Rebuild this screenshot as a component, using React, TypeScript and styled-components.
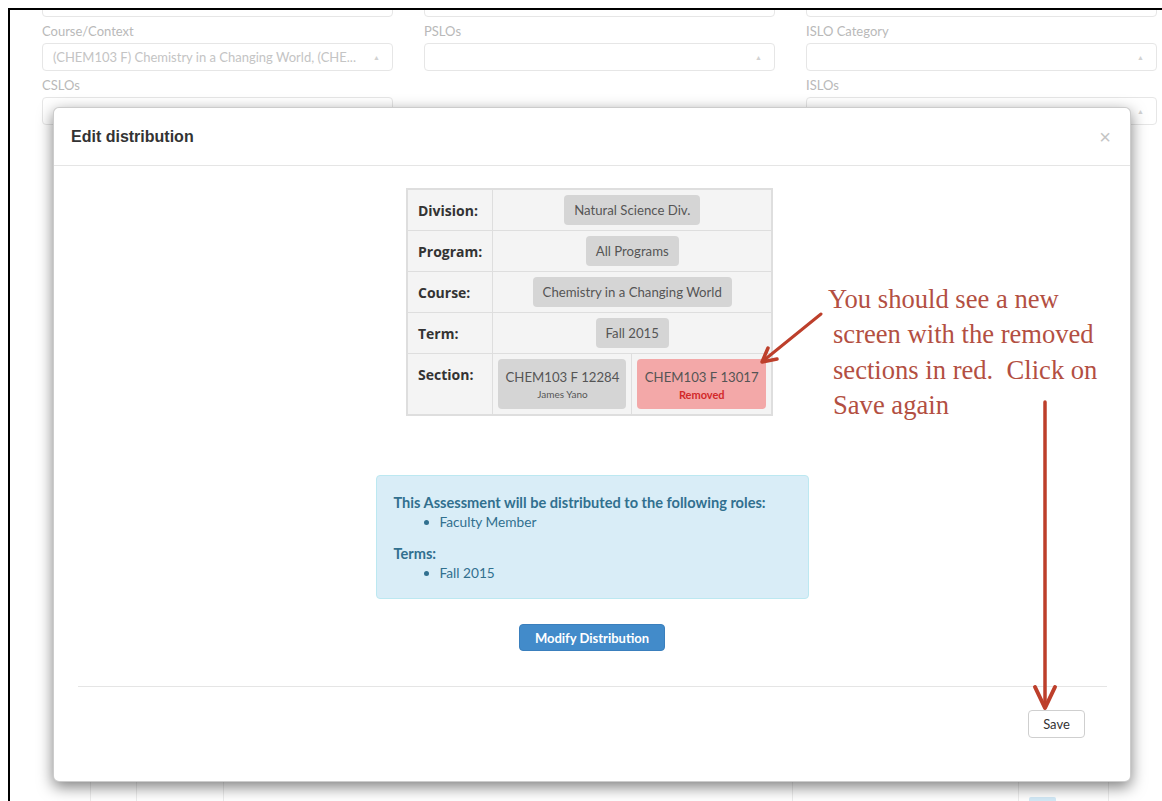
import styled, { createGlobalStyle } from "styled-components";

const GlobalStyle = createGlobalStyle`
  html, body {
    margin: 0;
    padding: 0;
    background: #fff;
  }
  body {
    font-family: Lato, "Open Sans", sans-serif;
    color: #333;
    overflow: hidden;
  }
`;

interface SelectField {
  label?: string;
  value?: string;
}

const columns: SelectField[][] = [
  [{}, { label: "Course/Context", value: "(CHEM103 F) Chemistry in a Changing World, (CHE..." }, { label: "CSLOs" }],
  [{}, { label: "PSLOs" }],
  [{}, { label: "ISLO Category" }, { label: "ISLOs" }],
];

const resultColumns = [48, 46, 87, 569, 226, 90, 49];

const App = () => {
  return (
    <>
      <GlobalStyle />
      <Frame>
        <FilterGrid>
          {columns.map((fields, ci) => (
            <FilterColumn key={ci}>
              {fields.map((field, fi) => (
                <div key={fi}>
                  {field.label && <FieldLabel>{field.label}</FieldLabel>}
                  <Select>
                    <span>{field.value}</span>
                    {fi > 0 && <Caret>▲</Caret>}
                  </Select>
                </div>
              ))}
            </FilterColumn>
          ))}
        </FilterGrid>

        <ResultRow>
          {resultColumns.map((w, i) => (
            <ResultCell key={i} style={{ width: w }} first={i === 0}>
              {i === 5 && <RowChip />}
            </ResultCell>
          ))}
        </ResultRow>

        <Modal>
          <ModalHeader>
            <ModalTitle>Edit distribution</ModalTitle>
            <CloseButton>×</CloseButton>
          </ModalHeader>

          <ModalBody>
            <DistTable>
              <colgroup>
                <col style={{ width: 86 }} />
                <col style={{ width: 139 }} />
                <col style={{ width: 140 }} />
              </colgroup>
              <tbody>
                <tr>
                  <LabelCell>Division:</LabelCell>
                  <ValueCell colSpan={2}>
                    <Badge>Natural Science Div.</Badge>
                  </ValueCell>
                </tr>
                <tr>
                  <LabelCell>Program:</LabelCell>
                  <ValueCell colSpan={2}>
                    <Badge>All Programs</Badge>
                  </ValueCell>
                </tr>
                <tr>
                  <LabelCell>Course:</LabelCell>
                  <ValueCell colSpan={2}>
                    <Badge>Chemistry in a Changing World</Badge>
                  </ValueCell>
                </tr>
                <tr>
                  <LabelCell>Term:</LabelCell>
                  <ValueCell colSpan={2}>
                    <Badge>Fall 2015</Badge>
                  </ValueCell>
                </tr>
                <tr>
                  <LabelCell>Section:</LabelCell>
                  <ValueCell>
                    <SectionBadge>
                      CHEM103 F 12284
                      <SectionNote>James Yano</SectionNote>
                    </SectionBadge>
                  </ValueCell>
                  <ValueCell>
                    <SectionBadge removed>
                      CHEM103 F 13017
                      <SectionNote removed>Removed</SectionNote>
                    </SectionBadge>
                  </ValueCell>
                </tr>
              </tbody>
            </DistTable>

            <InfoAlert>
              <strong>This Assessment will be distributed to the following roles:</strong>
              <AlertList>
                <li>Faculty Member</li>
              </AlertList>
              <strong>Terms:</strong>
              <AlertList last>
                <li>Fall 2015</li>
              </AlertList>
            </InfoAlert>

            <PrimaryButton>Modify Distribution</PrimaryButton>
          </ModalBody>

          <ModalFooter>
            <SaveButton>Save</SaveButton>
          </ModalFooter>
        </Modal>

        <Note>
          <NoteLine>You should see a new</NoteLine>
          <NoteLine indent>screen with the removed</NoteLine>
          <NoteLine indent>sections in red.  Click on</NoteLine>
          <NoteLine indent>Save again</NoteLine>
        </Note>

        <Arrows width="1152" height="791" viewBox="0 0 1152 791">
          <g stroke="#bd3f2b" strokeLinecap="round" strokeLinejoin="round" fill="none">
            <line x1="811" y1="304" x2="753" y2="351" strokeWidth="3" />
            <polyline points="767,349 752,352 758,338" strokeWidth="3.5" />
            <line x1="1035" y1="392" x2="1035" y2="696" strokeWidth="3.5" />
            <polyline points="1025,677 1035,698 1045,677" strokeWidth="4" />
          </g>
        </Arrows>
      </Frame>
    </>
  );
};

export default App;

const Frame = styled.div`
  position: relative;
  box-sizing: border-box;
  margin: 8px 0 0 8px;
  height: 793px;
  border-top: 2px solid #000;
  border-left: 2px solid #000;
  overflow: hidden;
  background: #fff;
`;

const FilterGrid = styled.div`
  display: grid;
  grid-template-columns: repeat(3, 351px);
  column-gap: 31px;
  padding-left: 32px;
  margin-top: -21px;
  align-items: start;
`;

const FilterColumn = styled.div`
  display: flex;
  flex-direction: column;
`;

const FieldLabel = styled.div`
  padding: 4px 0 2px;
  line-height: 20px;
  font-size: 13px;
  color: #b9b9b9;
`;

const Select = styled.div`
  box-sizing: border-box;
  height: 28px;
  display: flex;
  align-items: center;
  justify-content: space-between;
  padding: 0 12px 0 10px;
  border: 1px solid #e6e6e6;
  border-radius: 4px;
  font-size: 13px;
  color: #c4c4c4;
  white-space: nowrap;
`;

const Caret = styled.span`
  font-size: 7px;
  color: #d2d2d2;
`;

const ResultRow = styled.div`
  display: flex;
  padding-left: 32px;
  margin-top: 645px;
`;

const ResultCell = styled.div<{ first: boolean }>`
  box-sizing: border-box;
  height: 60px;
  border-left: ${(props) => (props.first ? "none" : "1px solid #ececec")};
`;

const RowChip = styled.div`
  width: 27px;
  height: 14px;
  margin: 27px 0 0 10px;
  background: #d3eaf7;
  border-radius: 2px;
`;

const Modal = styled.div`
  position: absolute;
  top: 97px;
  left: 43px;
  box-sizing: border-box;
  width: 1078px;
  background: #fff;
  border: 1px solid rgba(0, 0, 0, 0.2);
  border-radius: 6px;
  box-shadow: 0 5px 15px rgba(0, 0, 0, 0.5);
`;

const ModalHeader = styled.div`
  box-sizing: border-box;
  height: 58px;
  display: flex;
  align-items: center;
  justify-content: space-between;
  padding: 0 19px 0 17px;
  border-bottom: 1px solid #e5e5e5;
`;

const ModalTitle = styled.h4`
  margin: 0;
  font-family: "Liberation Sans", Arial, sans-serif;
  font-size: 16px;
  font-weight: 700;
  color: #333;
`;

const CloseButton = styled.span`
  font-family: "Liberation Sans", Arial, sans-serif;
  font-size: 20px;
  line-height: 1;
  color: #c4c4c4;
`;

const ModalBody = styled.div`
  display: flex;
  flex-direction: column;
  align-items: center;
  padding: 22px 0 35px 0;
`;

const DistTable = styled.table`
  width: 365px;
  margin-right: 5px;
  table-layout: fixed;
  border-collapse: collapse;
  border: 2px solid #dedede;
  font-size: 13.2px;
`;

const LabelCell = styled.td`
  padding: 11px 4px 8px 10px;
  vertical-align: top;
  line-height: 20px;
  border: 1px solid #dedede;
  background: #f4f4f4;
  font-family: "Open Sans", sans-serif;
  font-size: 14px;
  font-weight: 700;
  color: #333;
  text-align: left;
  white-space: nowrap;
`;

const ValueCell = styled.td`
  padding: 5px;
  border: 1px solid #dedede;
  background: #f4f4f4;
  text-align: center;
  white-space: nowrap;
`;

const Badge = styled.span`
  display: inline-block;
  padding: 6px 10px;
  line-height: 18px;
  background: #d5d5d5;
  border-radius: 4px;
  color: #555;
`;

const SectionBadge = styled.div<{ removed?: boolean }>`
  padding: 8px 2px 7px;
  line-height: 20px;
  background: ${(props) => (props.removed ? "#f3a8a8" : "#d5d5d5")};
  border-radius: 4px;
  color: #555;
`;

const SectionNote = styled.div<{ removed?: boolean }>`
  font-size: ${(props) => (props.removed ? "11px" : "10px")};
  font-weight: ${(props) => (props.removed ? 700 : 400)};
  line-height: 15px;
  color: ${(props) => (props.removed ? "#d22a2a" : "#555")};
`;

const InfoAlert = styled.div`
  box-sizing: border-box;
  width: 433px;
  margin-top: 59px;
  padding: 17px 15px 15px 17px;
  background: #d9edf7;
  border: 1px solid #bce8f1;
  border-radius: 4px;
  color: #31708f;
  font-size: 13.7px;
  line-height: 19px;

  strong {
    display: block;
    font-size: 14.6px;
  }
`;

const AlertList = styled.ul<{ last?: boolean }>`
  margin: 0 0 ${(props) => (props.last ? "0" : "12px")};
  padding-left: 46px;
  line-height: 20px;
`;

const PrimaryButton = styled.button`
  box-sizing: border-box;
  height: 27px;
  margin-top: 25px;
  padding: 0 15px;
  background: #428bca;
  border: 1px solid #3a7fbd;
  border-radius: 4px;
  color: #fff;
  font-family: Lato, "Open Sans", sans-serif;
  font-size: 13px;
  font-weight: 700;
`;

const ModalFooter = styled.div`
  display: flex;
  justify-content: flex-end;
  margin: 0 23px 0 24px;
  padding: 23px 22px 43px;
  border-top: 1px solid #e5e5e5;
`;

const SaveButton = styled.button`
  box-sizing: border-box;
  width: 57px;
  height: 28px;
  background: #fff;
  border: 1px solid #cfcfcf;
  border-radius: 4px;
  color: #333;
  font-family: Lato, "Open Sans", sans-serif;
  font-size: 13px;
`;

const Note = styled.div`
  position: absolute;
  top: 272px;
  left: 818px;
  font-family: "Liberation Serif", "Times New Roman", serif;
  font-size: 26.6px;
  line-height: 35.3px;
  color: #b34f42;
  white-space: pre;
`;

const NoteLine = styled.div<{ indent?: boolean }>`
  padding-left: ${(props) => (props.indent ? "5px" : "0")};
`;

const Arrows = styled.svg`
  position: absolute;
  top: 0;
  left: 0;
  pointer-events: none;
`;
